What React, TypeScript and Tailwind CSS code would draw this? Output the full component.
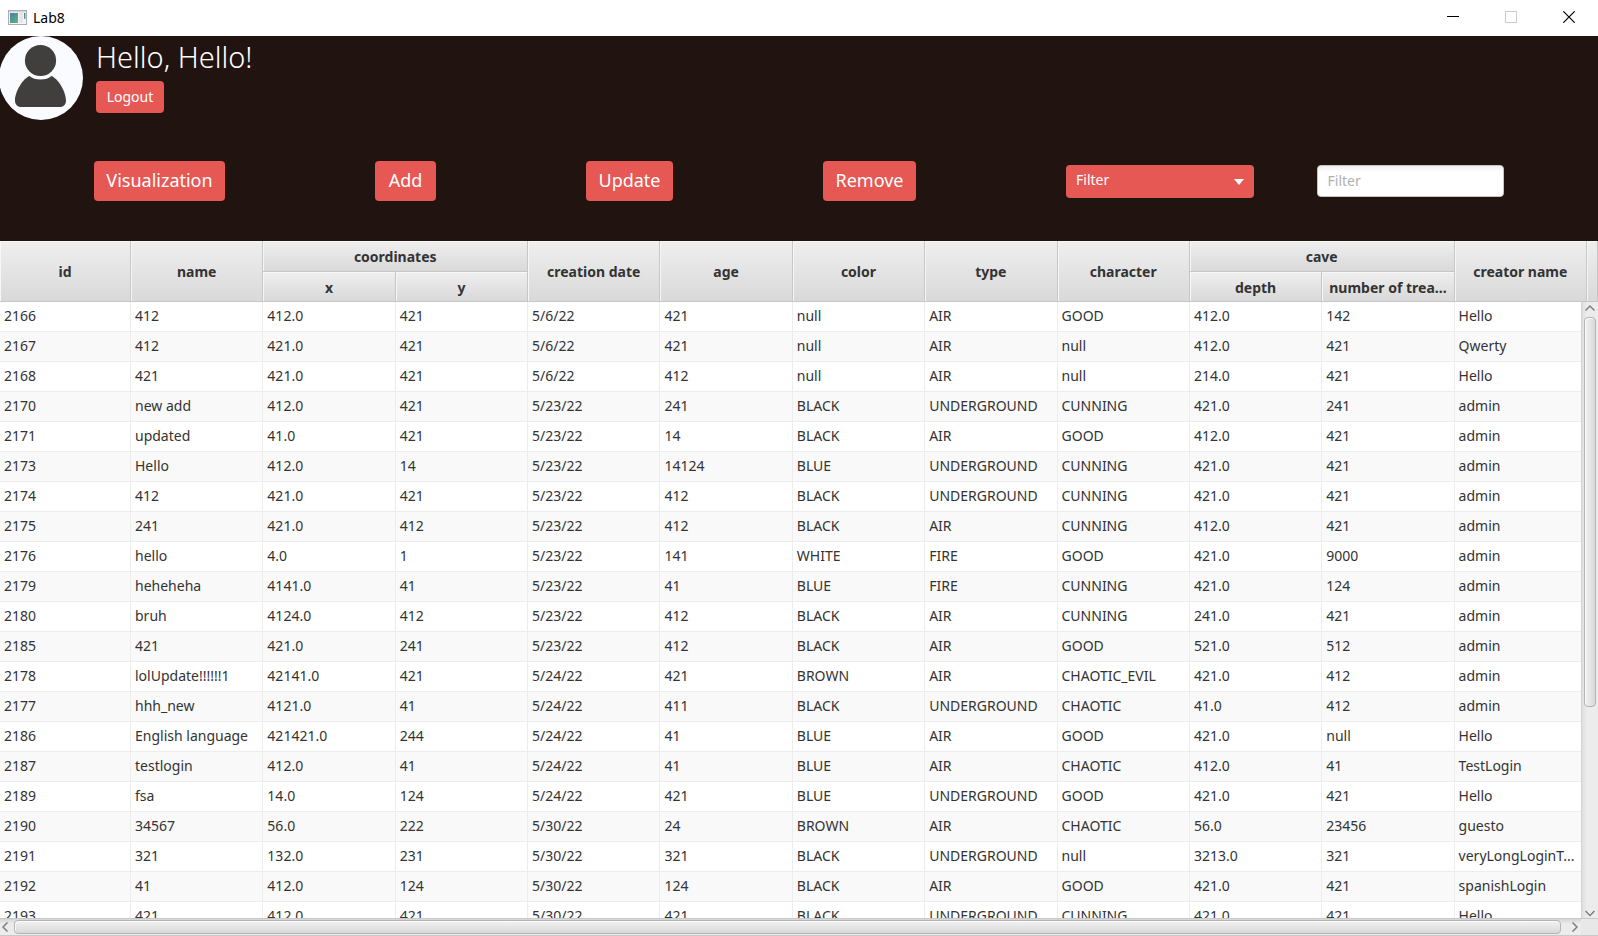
import type { ReactNode } from "react";

const rows: string[][] = [
  ["2166", "412", "412.0", "421", "5/6/22", "421", "null", "AIR", "GOOD", "412.0", "142", "Hello"],
  ["2167", "412", "421.0", "421", "5/6/22", "421", "null", "AIR", "null", "412.0", "421", "Qwerty"],
  ["2168", "421", "421.0", "421", "5/6/22", "412", "null", "AIR", "null", "214.0", "421", "Hello"],
  ["2170", "new add", "412.0", "421", "5/23/22", "241", "BLACK", "UNDERGROUND", "CUNNING", "421.0", "241", "admin"],
  ["2171", "updated", "41.0", "421", "5/23/22", "14", "BLACK", "AIR", "GOOD", "412.0", "421", "admin"],
  ["2173", "Hello", "412.0", "14", "5/23/22", "14124", "BLUE", "UNDERGROUND", "CUNNING", "421.0", "421", "admin"],
  ["2174", "412", "421.0", "421", "5/23/22", "412", "BLACK", "UNDERGROUND", "CUNNING", "421.0", "421", "admin"],
  ["2175", "241", "421.0", "412", "5/23/22", "412", "BLACK", "AIR", "CUNNING", "412.0", "421", "admin"],
  ["2176", "hello", "4.0", "1", "5/23/22", "141", "WHITE", "FIRE", "GOOD", "421.0", "9000", "admin"],
  ["2179", "heheheha", "4141.0", "41", "5/23/22", "41", "BLUE", "FIRE", "CUNNING", "421.0", "124", "admin"],
  ["2180", "bruh", "4124.0", "412", "5/23/22", "412", "BLACK", "AIR", "CUNNING", "241.0", "421", "admin"],
  ["2185", "421", "421.0", "241", "5/23/22", "412", "BLACK", "AIR", "GOOD", "521.0", "512", "admin"],
  ["2178", "lolUpdate!!!!!!1", "42141.0", "421", "5/24/22", "421", "BROWN", "AIR", "CHAOTIC_EVIL", "421.0", "412", "admin"],
  ["2177", "hhh_new", "4121.0", "41", "5/24/22", "411", "BLACK", "UNDERGROUND", "CHAOTIC", "41.0", "412", "admin"],
  ["2186", "English language", "421421.0", "244", "5/24/22", "41", "BLUE", "AIR", "GOOD", "421.0", "null", "Hello"],
  ["2187", "testlogin", "412.0", "41", "5/24/22", "41", "BLUE", "AIR", "CHAOTIC", "412.0", "41", "TestLogin"],
  ["2189", "fsa", "14.0", "124", "5/24/22", "421", "BLUE", "UNDERGROUND", "GOOD", "421.0", "421", "Hello"],
  ["2190", "34567", "56.0", "222", "5/30/22", "24", "BROWN", "AIR", "CHAOTIC", "56.0", "23456", "guesto"],
  ["2191", "321", "132.0", "231", "5/30/22", "321", "BLACK", "UNDERGROUND", "null", "3213.0", "321", "veryLongLoginT..."],
  ["2192", "41", "412.0", "124", "5/30/22", "124", "BLACK", "AIR", "GOOD", "421.0", "421", "spanishLogin"],
  ["2193", "421", "412.0", "421", "5/30/22", "421", "BLACK", "UNDERGROUND", "CUNNING", "421.0", "421", "Hello"],
];

function TitleBar() {
  return (
    <header className="flex h-9 shrink-0 items-center bg-white pl-2 text-black">
      <svg width="19" height="16" viewBox="0 0 19 16" aria-hidden="true">
        <defs>
          <linearGradient id="pane" x1="0" y1="0" x2="1" y2="1">
            <stop offset="0" stopColor="#4a7fa5" />
            <stop offset="1" stopColor="#5fb77f" />
          </linearGradient>
        </defs>
        <rect x="0.5" y="0.5" width="18" height="14" fill="#f4f4f4" stroke="#a9adb3" />
        <rect x="1" y="1" width="17" height="1.5" fill="#d3d6da" />
        <rect x="2" y="3" width="8" height="10" fill="url(#pane)" />
        <rect x="11" y="3" width="4" height="10" fill="#e6e6e6" />
        <rect x="16" y="3" width="1.5" height="6" fill="url(#pane)" />
      </svg>
      <h1 className="ml-1.5 flex-1 text-sm">Lab8</h1>
      <WindowButton label="Minimize">
        <path d="M0 5.5h12" stroke="#000" />
      </WindowButton>
      <WindowButton label="Maximize">
        <rect x="0.5" y="0.5" width="11" height="11" stroke="#ccc" />
      </WindowButton>
      <WindowButton label="Close">
        <path d="M0.3 0.3l11.4 11.4M11.7 0.3L0.3 11.7" stroke="#000" strokeWidth="1.2" />
      </WindowButton>
    </header>
  );
}

function WindowButton({ label, children }: { label: string; children: ReactNode }) {
  return (
    <button type="button" aria-label={label} className="flex h-9 w-[58px] items-center justify-center pb-0.5">
      <svg width="12" height="12" viewBox="0 0 12 12" fill="none">
        {children}
      </svg>
    </button>
  );
}

function Avatar() {
  return (
    <svg width="84" height="84" viewBox="0 0 84 84" aria-hidden="true" className="shrink-0">
      <circle cx="41" cy="42" r="42" fill="#fafbfe" />
      <circle cx="40.5" cy="24.5" r="15.6" fill="#403f3d" />
      <path
        d="M29.5 40C32 42.300 36 43.600 40.500 43.600S49 42.300 51.500 40C58 42.500 65.800 55 66 64.500C66 68.500 63.500 71 60 71H21C17.500 71 15 68.500 15 64.500C15.200 55 23 42.500 29.500 40Z"
        fill="#403f3d"
      />
    </svg>
  );
}

function ActionButton({ className, children }: { className: string; children: ReactNode }) {
  return (
    <button type="button" className={`h-10 shrink-0 rounded bg-[#e55853] pb-0.5 text-lg text-white ${className}`}>
      {children}
    </button>
  );
}

function Toolbar() {
  return (
    <div className="mt-[41px] flex items-center px-[94px]">
      <div className="flex shrink-0 gap-[150px] pr-[150px]">
        <ActionButton className="w-[131px]">Visualization</ActionButton>
        <ActionButton className="w-[61px]">Add</ActionButton>
        <ActionButton className="w-[87px]">Update</ActionButton>
        <ActionButton className="w-[93px]">Remove</ActionButton>
      </div>
      <div className="grid min-w-0 flex-1 grid-cols-2 gap-[63px]">
        <div className="relative">
          <select
            aria-label="Filter column"
            className="block h-[33px] w-full appearance-none rounded bg-[#e55853] px-2.5 pb-0.5 text-sm text-white outline-none"
          >
            <option>Filter</option>
          </select>
          <svg width="10" height="6" viewBox="0 0 10 6" className="pointer-events-none absolute top-3.5 right-2.5" aria-hidden="true">
            <path d="M0 0h10L5 6z" fill="#fff" />
          </svg>
        </div>
        <input
          type="text"
          aria-label="Filter value"
          placeholder="Filter"
          className="h-8 w-full rounded border border-[#c4c4c4] bg-white bg-linear-to-b from-[#f0f0f0] to-white to-20% px-2.5 text-sm text-[#333] outline-none placeholder:text-[#b0b0b0]"
        />
      </div>
    </div>
  );
}

const headCell =
  "border-r border-b border-[#c6c6c6] bg-linear-to-b from-[#efefef] to-[#d9d9d9] px-0 pt-0.5 pb-0 text-center font-bold whitespace-nowrap shadow-[inset_1px_1px_0_#f7f7f7]";

function Head({ children, rowSpan, colSpan }: { children?: ReactNode; rowSpan?: number; colSpan?: number }) {
  return (
    <th scope={colSpan ? "colgroup" : "col"} rowSpan={rowSpan} colSpan={colSpan} className={headCell}>
      {children}
    </th>
  );
}

function CaveTable() {
  return (
    <table className="w-full table-fixed border-separate border-spacing-0 text-sm text-[#333]">
      <colgroup>
        <col className="w-[131px]" />
        {rows[0].slice(1).map((_, i) => (
          <col key={i} />
        ))}
        <col className="w-[11px]" />
      </colgroup>
      <thead>
        <tr className="h-[31px]">
          <Head rowSpan={2}>id</Head>
          <Head rowSpan={2}>name</Head>
          <Head colSpan={2}>coordinates</Head>
          <Head rowSpan={2}>creation date</Head>
          <Head rowSpan={2}>age</Head>
          <Head rowSpan={2}>color</Head>
          <Head rowSpan={2}>type</Head>
          <Head rowSpan={2}>character</Head>
          <Head colSpan={2}>cave</Head>
          <Head rowSpan={2}>creator name</Head>
          <td rowSpan={2} className={headCell} />
        </tr>
        <tr className="h-[30px]">
          <Head>x</Head>
          <Head>y</Head>
          <Head>depth</Head>
          <Head>number of trea...</Head>
        </tr>
      </thead>
      <tbody>
        {rows.map((row) => (
          <tr key={row[0]} className="h-[30px] bg-white even:bg-[#f9f9f9]">
            {row.map((cell, i) => (
              <td key={i} className="border-r border-b border-[#ededed] px-1 pt-0 pb-0.5 whitespace-nowrap">
                {cell}
              </td>
            ))}
            <td className="border-b border-[#ededed] p-0" />
          </tr>
        ))}
      </tbody>
    </table>
  );
}

function Arrow({ d, label, className }: { d: string; label: string; className: string }) {
  return (
    <button type="button" aria-label={label} className={`flex shrink-0 items-center justify-center ${className}`}>
      <svg width="10" height="10" viewBox="0 0 10 10" fill="none" stroke="#808080" strokeWidth="1.500" className="shrink-0">
        <path d={d} />
      </svg>
    </button>
  );
}

function VerticalScrollBar() {
  return (
    <div className="absolute top-[61px] right-0 bottom-0 flex w-[17px] flex-col border-l border-[#d4d4d4] bg-linear-to-r from-[#dedede] to-[#ececec] to-30%">
      <Arrow label="Scroll up" d="M0.500 7.500L5 3l4.500 4.500" className="h-[15px] pb-1" />
      <div className="flex-1 px-0.5">
        <div className="h-[66.5%] rounded border border-[#b4b4b4] bg-linear-to-r from-[#f2f2f2] to-[#d9d9d9] shadow-[inset_1px_1px_0_#fbfbfb]" />
      </div>
      <Arrow label="Scroll down" d="M0.500 3L5 7.500L9.500 3" className="h-[15px] pt-1" />
    </div>
  );
}

function HorizontalScrollBar() {
  return (
    <div className="flex h-[18px] shrink-0 border-t border-b border-[#c8c8c8] bg-linear-to-b from-[#d6d6d6] to-[#ececec] to-30%">
      <Arrow label="Scroll left" d="M7.500 0.500L3 5l4.500 4.500" className="w-[14px] pr-1" />
      <div className="flex-1 py-px">
        <div className="h-3.5 w-full rounded border border-[#b4b4b4] bg-linear-to-b from-[#f2f2f2] to-[#d9d9d9] shadow-[inset_1px_1px_0_#fbfbfb]" />
      </div>
      <Arrow label="Scroll right" d="M2.500 0.500L7 5L2.500 9.500" className="ml-2 w-3" />
      <div className="w-[17px] bg-[#e8e8e8]" />
    </div>
  );
}

export default function App() {
  return (
    <div className="flex h-screen flex-col overflow-hidden bg-[#211310] font-['Noto_Sans','Open_Sans',sans-serif]">
      <TitleBar />
      <section className="h-[205px] shrink-0">
        <div className="flex">
          <Avatar />
          <div className="ml-3 flex flex-col items-start">
            <h2 className="mb-1 text-[29px] leading-[41px] font-light text-white">Hello, Hello!</h2>
            <button type="button" className="h-8 w-[68px] rounded bg-[#e55853] text-sm text-white">
              Logout
            </button>
          </div>
        </div>
        <Toolbar />
      </section>
      <main className="relative min-h-0 flex-1 overflow-hidden bg-white">
        <CaveTable />
        <VerticalScrollBar />
      </main>
      <HorizontalScrollBar />
    </div>
  );
}
